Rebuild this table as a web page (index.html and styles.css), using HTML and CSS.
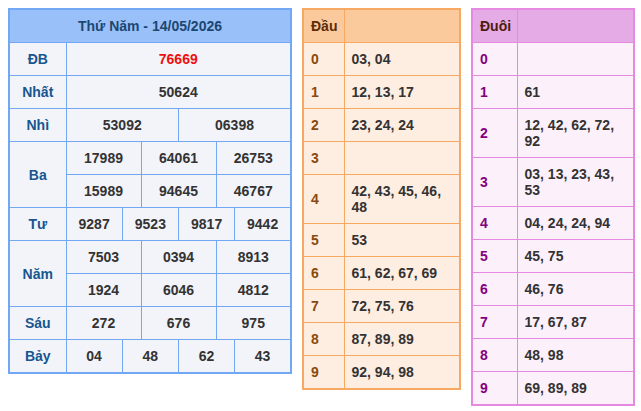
FILE: index.html
```html
<!DOCTYPE html>
<html lang="vi">
<head>
<meta charset="utf-8">
<title>Kết quả xổ số</title>
<link rel="stylesheet" href="styles.css">
</head>
<body>
<div class="wrap">
  <table class="kq">
    <colgroup>
      <col class="c-lbl">
      <col><col><col><col><col><col><col><col><col><col><col><col>
    </colgroup>
    <tr><th colspan="13" class="title">Thứ Năm - 14/05/2026</th></tr>
    <tr><td class="lbl">ĐB</td><td colspan="12" class="db">76669</td></tr>
    <tr><td class="lbl">Nhất</td><td colspan="12">50624</td></tr>
    <tr><td class="lbl">Nhì</td><td colspan="6">53092</td><td colspan="6">06398</td></tr>
    <tr><td class="lbl" rowspan="2">Ba</td><td colspan="4">17989</td><td colspan="4">64061</td><td colspan="4">26753</td></tr>
    <tr><td colspan="4">15989</td><td colspan="4">94645</td><td colspan="4">46767</td></tr>
    <tr><td class="lbl">Tư</td><td colspan="3">9287</td><td colspan="3">9523</td><td colspan="3">9817</td><td colspan="3">9442</td></tr>
    <tr><td class="lbl" rowspan="2">Năm</td><td colspan="4">7503</td><td colspan="4">0394</td><td colspan="4">8913</td></tr>
    <tr><td colspan="4">1924</td><td colspan="4">6046</td><td colspan="4">4812</td></tr>
    <tr><td class="lbl">Sáu</td><td colspan="4">272</td><td colspan="4">676</td><td colspan="4">975</td></tr>
    <tr><td class="lbl">Bảy</td><td colspan="3">04</td><td colspan="3">48</td><td colspan="3">62</td><td colspan="3">43</td></tr>
  </table>

  <table class="lt dau">
    <colgroup><col class="c-d"><col></colgroup>
    <tr><th>Đầu</th><th></th></tr>
    <tr><td class="k">0</td><td>03, 04</td></tr>
    <tr><td class="k">1</td><td>12, 13, 17</td></tr>
    <tr><td class="k">2</td><td>23, 24, 24</td></tr>
    <tr><td class="k">3</td><td></td></tr>
    <tr><td class="k">4</td><td>42, 43, 45, 46, 48</td></tr>
    <tr><td class="k">5</td><td>53</td></tr>
    <tr><td class="k">6</td><td>61, 62, 67, 69</td></tr>
    <tr><td class="k">7</td><td>72, 75, 76</td></tr>
    <tr><td class="k">8</td><td>87, 89, 89</td></tr>
    <tr><td class="k">9</td><td>92, 94, 98</td></tr>
  </table>

  <table class="lt duoi">
    <colgroup><col class="c-d"><col></colgroup>
    <tr><th>Đuôi</th><th></th></tr>
    <tr><td class="k">0</td><td></td></tr>
    <tr><td class="k">1</td><td>61</td></tr>
    <tr><td class="k">2</td><td>12, 42, 62, 72, 92</td></tr>
    <tr><td class="k">3</td><td>03, 13, 23, 43, 53</td></tr>
    <tr><td class="k">4</td><td>04, 24, 24, 94</td></tr>
    <tr><td class="k">5</td><td>45, 75</td></tr>
    <tr><td class="k">6</td><td>46, 76</td></tr>
    <tr><td class="k">7</td><td>17, 67, 87</td></tr>
    <tr><td class="k">8</td><td>48, 98</td></tr>
    <tr><td class="k">9</td><td>69, 89, 89</td></tr>
  </table>
</div>
</body>
</html>
```

FILE: styles.css
```css
html, body {
  background: #ffffff;
}
body {
  margin: 8px 0 8px 8px;
  font-family: "Liberation Sans", Arial, sans-serif;
  font-size: 14px;
  font-weight: bold;
  color: #333333;
}
.wrap {
  display: flex;
  align-items: flex-start;
  gap: 10px;
}
table {
  flex-shrink: 0;
  border-collapse: collapse;
  table-layout: fixed;
}
th, td {
  padding: 8px 7px;
  line-height: 16px;
  vertical-align: middle;
}

/* main results table */
.kq {
  width: 284px;
  border: 2px solid #72a7f4;
  background: #f3f4f9;
}
.kq .c-lbl { width: 57px; }
.kq th, .kq td {
  border: 1px solid #72a7f4;
  text-align: center;
  padding: 8px 0;
}
.kq .title {
  background: #9ac0fa;
  color: #1c4770;
}
.kq .lbl {
  color: #17568f;
}
.kq .db {
  color: #ee1111;
}

/* loto tables */
.lt th, .lt td {
  text-align: left;
}
.dau {
  width: 159px;
  border: 2px solid #f7a863;
  background: #feede1;
}
.dau .c-d { width: 41px; }
.dau th, .dau td { border: 1px solid #f7a863; }
.dau th {
  background: #fbca9c;
  color: #5e2c0b;
}
.dau .k { color: #8b4a0c; }

.duoi {
  width: 164px;
  border: 2px solid #e68ae1;
  background: #fcf0fa;
}
.duoi .c-d { width: 45px; }
.duoi th, .duoi td { border: 1px solid #e68ae1; }
.duoi th {
  background: #e4abe7;
  color: #4e1c0c;
}
.duoi .k { color: #82007f; }
```
